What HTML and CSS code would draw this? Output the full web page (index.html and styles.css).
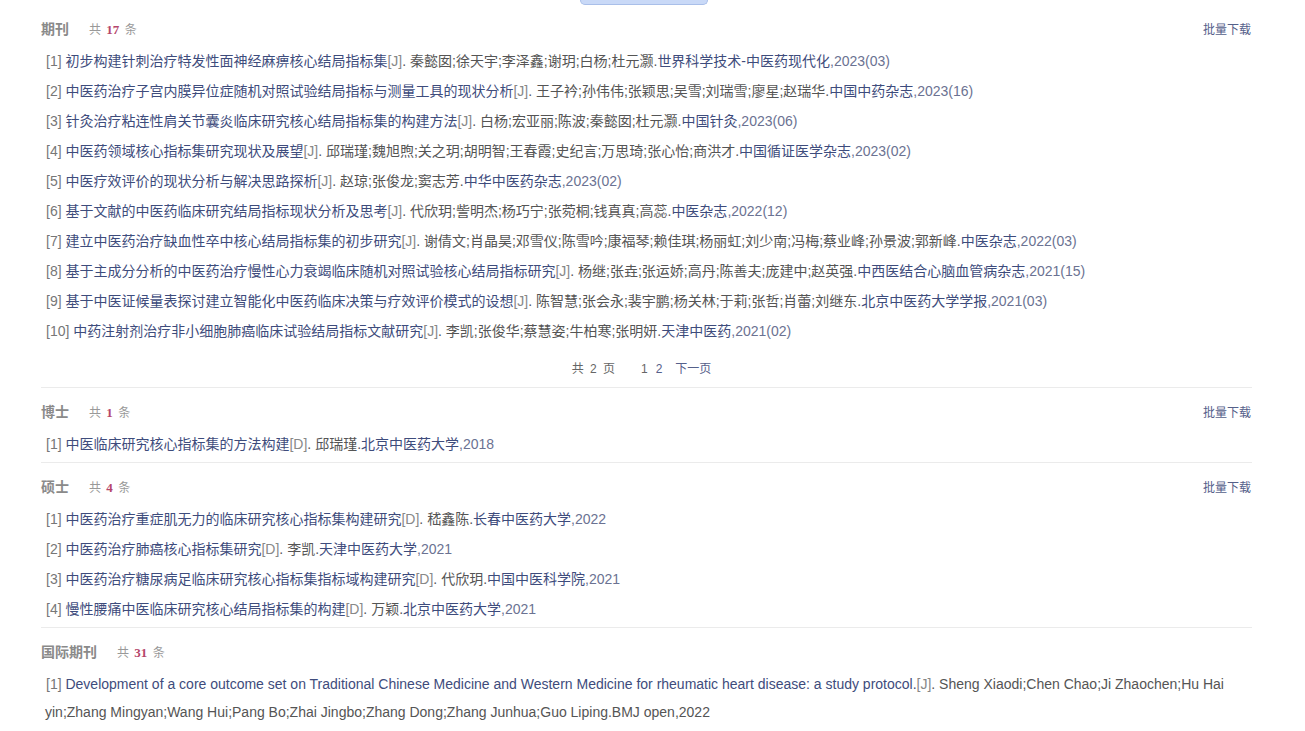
FILE: index.html
```html
<!DOCTYPE html>
<html lang="zh-CN">
<head>
<meta charset="utf-8">
<title>文献列表</title>
<link rel="stylesheet" href="styles.css">
</head>
<body>
<div class="page">
  <div class="topbtn"></div>

  <div class="section first">
    <div class="sec-head">
      <div class="sec-title">期刊<span class="count">共 <b>17</b> 条</span></div>
      <a class="batch" href="#">批量下载</a>
    </div>
    <ul class="list">
      <li><span class="no">[1]</span> <a class="t" href="#">初步构建针刺治疗特发性面神经麻痹核心结局指标集</a><span class="ty">[J]</span>. 秦懿囡;徐天宇;李泽鑫;谢玥;白杨;杜元灏.<a class="j" href="#">世界科学技术-中医药现代化</a><span class="y">,2023(03)</span></li>
      <li><span class="no">[2]</span> <a class="t" href="#">中医药治疗子宫内膜异位症随机对照试验结局指标与测量工具的现状分析</a><span class="ty">[J]</span>. 王子衿;孙伟伟;张颖思;吴雪;刘瑞雪;廖星;赵瑞华.<a class="j" href="#">中国中药杂志</a><span class="y">,2023(16)</span></li>
      <li><span class="no">[3]</span> <a class="t" href="#">针灸治疗粘连性肩关节囊炎临床研究核心结局指标集的构建方法</a><span class="ty">[J]</span>. 白杨;宏亚丽;陈波;秦懿囡;杜元灏.<a class="j" href="#">中国针灸</a><span class="y">,2023(06)</span></li>
      <li><span class="no">[4]</span> <a class="t" href="#">中医药领域核心指标集研究现状及展望</a><span class="ty">[J]</span>. 邱瑞瑾;魏旭煦;关之玥;胡明智;王春霞;史纪言;万思琦;张心怡;商洪才.<a class="j" href="#">中国循证医学杂志</a><span class="y">,2023(02)</span></li>
      <li><span class="no">[5]</span> <a class="t" href="#">中医疗效评价的现状分析与解决思路探析</a><span class="ty">[J]</span>. 赵琼;张俊龙;窦志芳.<a class="j" href="#">中华中医药杂志</a><span class="y">,2023(02)</span></li>
      <li><span class="no">[6]</span> <a class="t" href="#">基于文献的中医药临床研究结局指标现状分析及思考</a><span class="ty">[J]</span>. 代欣玥;訾明杰;杨巧宁;张菀桐;钱真真;高蕊.<a class="j" href="#">中医杂志</a><span class="y">,2022(12)</span></li>
      <li><span class="no">[7]</span> <a class="t" href="#">建立中医药治疗缺血性卒中核心结局指标集的初步研究</a><span class="ty">[J]</span>. 谢倩文;肖晶昊;邓雪仪;陈雪吟;康福琴;赖佳琪;杨丽虹;刘少南;冯梅;蔡业峰;孙景波;郭新峰.<a class="j" href="#">中医杂志</a><span class="y">,2022(03)</span></li>
      <li><span class="no">[8]</span> <a class="t" href="#">基于主成分分析的中医药治疗慢性心力衰竭临床随机对照试验核心结局指标研究</a><span class="ty">[J]</span>. 杨继;张垚;张运娇;高丹;陈善夫;庞建中;赵英强.<a class="j" href="#">中西医结合心脑血管病杂志</a><span class="y">,2021(15)</span></li>
      <li><span class="no">[9]</span> <a class="t" href="#">基于中医证候量表探讨建立智能化中医药临床决策与疗效评价模式的设想</a><span class="ty">[J]</span>. 陈智慧;张会永;裴宇鹏;杨关林;于莉;张哲;肖蕾;刘继东.<a class="j" href="#">北京中医药大学学报</a><span class="y">,2021(03)</span></li>
      <li><span class="no">[10]</span> <a class="t" href="#">中药注射剂治疗非小细胞肺癌临床试验结局指标文献研究</a><span class="ty">[J]</span>. 李凯;张俊华;蔡慧姿;牛柏寒;张明妍.<a class="j" href="#">天津中医药</a><span class="y">,2021(02)</span></li>
    </ul>
    <div class="pager"><span class="total">共 2 页</span><span class="cur">1</span><a href="#">2</a><a href="#">下一页</a></div>
  </div>

  <div class="section">
    <div class="sec-head">
      <div class="sec-title">博士<span class="count">共 <b>1</b> 条</span></div>
      <a class="batch" href="#">批量下载</a>
    </div>
    <ul class="list">
      <li><span class="no">[1]</span> <a class="t" href="#">中医临床研究核心指标集的方法构建</a><span class="ty">[D]</span>. 邱瑞瑾.<a class="j" href="#">北京中医药大学</a><span class="y">,2018</span></li>
    </ul>
  </div>

  <div class="section">
    <div class="sec-head">
      <div class="sec-title">硕士<span class="count">共 <b>4</b> 条</span></div>
      <a class="batch" href="#">批量下载</a>
    </div>
    <ul class="list">
      <li><span class="no">[1]</span> <a class="t" href="#">中医药治疗重症肌无力的临床研究核心指标集构建研究</a><span class="ty">[D]</span>. 嵇鑫陈.<a class="j" href="#">长春中医药大学</a><span class="y">,2022</span></li>
      <li><span class="no">[2]</span> <a class="t" href="#">中医药治疗肺癌核心指标集研究</a><span class="ty">[D]</span>. 李凯.<a class="j" href="#">天津中医药大学</a><span class="y">,2021</span></li>
      <li><span class="no">[3]</span> <a class="t" href="#">中医药治疗糖尿病足临床研究核心指标集指标域构建研究</a><span class="ty">[D]</span>. 代欣玥.<a class="j" href="#">中国中医科学院</a><span class="y">,2021</span></li>
      <li><span class="no">[4]</span> <a class="t" href="#">慢性腰痛中医临床研究核心结局指标集的构建</a><span class="ty">[D]</span>. 万颖.<a class="j" href="#">北京中医药大学</a><span class="y">,2021</span></li>
    </ul>
  </div>

  <div class="section last">
    <div class="sec-head">
      <div class="sec-title">国际期刊<span class="count">共 <b>31</b> 条</span></div>
    </div>
    <ul class="list">
      <li><span class="no">[1]</span> <a class="t" href="#">Development of a core outcome set on Traditional Chinese Medicine and Western Medicine for rheumatic heart disease: a study protocol.</a><span class="ty">[J]</span>. Sheng Xiaodi;Chen Chao;Ji Zhaochen;Hu Hai yin;Zhang Mingyan;Wang Hui;Pang Bo;Zhai Jingbo;Zhang Dong;Zhang Junhua;Guo Liping.BMJ open,2022</li>
    </ul>
  </div>
</div>
</body>
</html>
```

FILE: styles.css
```css
* { box-sizing: border-box; }
html, body { margin: 0; padding: 0; background: #fff; }
body {
  font-family: "Liberation Sans", Arial, "Noto Sans CJK SC", sans-serif;
  color: #555;
  font-size: 14px;
}
a { text-decoration: none; }
.page {
  padding: 0 53px 0 41px;
}
.topbtn {
  width: 128px;
  height: 5px;
  margin: 0 auto;
  position: relative;
  left: -3px;
  background: #c9d9f7;
  border: 1px solid #a9bfe9;
  border-top: none;
  border-radius: 0 0 12px 12px;
}
.section {
  padding: 14px 0 3px;
  border-bottom: 1px solid #ebebeb;
}
.section.first { padding-top: 14px; padding-bottom: 8px; }
.section.last { border-bottom: none; }
.sec-head {
  display: flex;
  justify-content: space-between;
  align-items: baseline;
  height: 20px;
  line-height: 20px;
}
.sec-title {
  font-size: 14px;
  font-weight: bold;
  color: #8a8a8a;
}
.count {
  font-size: 12px;
  font-weight: normal;
  color: #999;
  margin-left: 20px;
}
.count b {
  color: #b5466b;
  font-family: "Liberation Serif", serif;
  font-size: 13px;
  margin: 0 2px;
}
.batch {
  font-size: 12px;
  color: #55608a;
  margin-right: 1px;
}
.list {
  list-style: none;
  margin: 7px 0 0;
  padding: 0 0 0 4px;
}
.list li {
  line-height: 28px;
  padding: 1px 0;
  color: #555;
}
.no { color: #777; margin-left: 1px; }
.t { color: #3e4c7c; }
.ty { color: #888; }
.j { color: #3e4c7c; }
.y { color: #6b7292; }
.pager {
  margin: 13px 0 0;
  padding-right: 10px;
  height: 20px;
  line-height: 20px;
  font-size: 12px;
  text-align: center;
  color: #666;
  word-spacing: 3px;
}
.pager .total { margin-right: 26px; color: #666; }
.pager .cur { color: #666; margin-right: 8px; }
.pager a { color: #55608a; margin-right: 13px; }
.pager a:last-child { margin-right: 0; }
```
